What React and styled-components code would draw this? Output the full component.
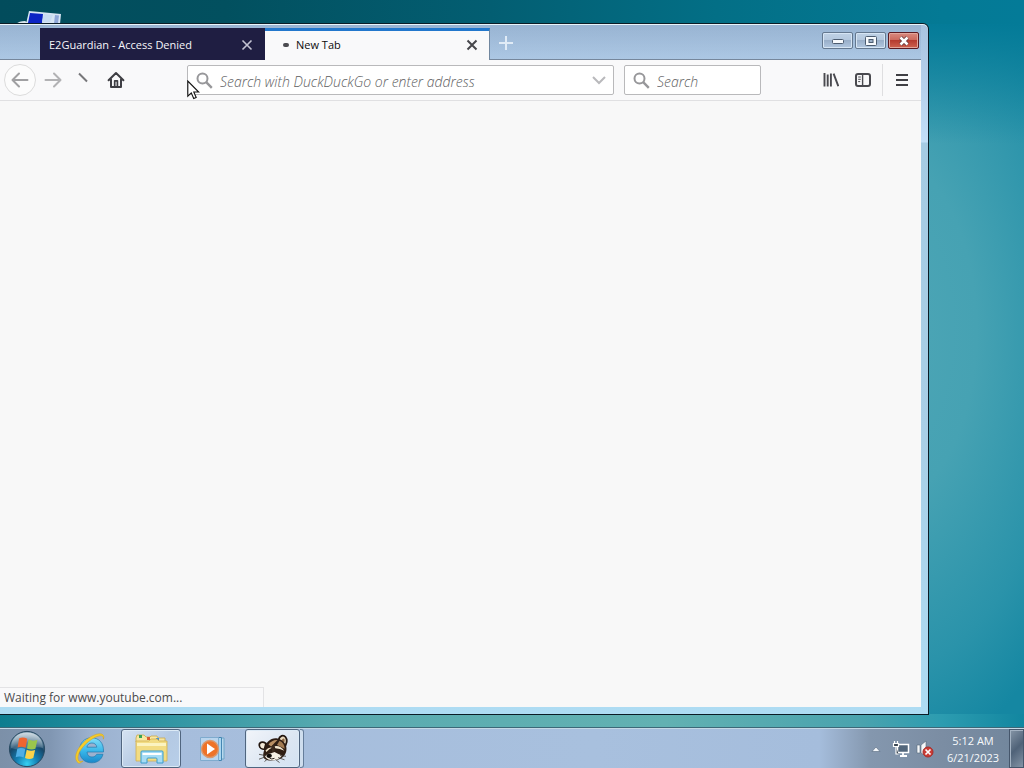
import React from 'react';
import styled, { createGlobalStyle, css } from 'styled-components';

const GlobalStyle = createGlobalStyle`
  *, *::before, *::after { box-sizing: border-box; }
  body {
    margin: 0;
    font-family: "Open Sans", "Noto Sans", sans-serif;
    font-size: 12px;
    line-height: 16px;
    color: #0c0c0d;
  }
  button, input { font: inherit; color: inherit; }
  button { border: 0; padding: 0; background: none; display: flex; align-items: center; justify-content: center; }
  svg { display: block; flex: none; }
`;

const Desktop = styled.div`
  position: relative;
  display: flex;
  flex-direction: column;
  height: 100vh;
  overflow: hidden;
  background:
    linear-gradient(to right, #0d7d8f 0, #2790a0 12%, #5aabb0 33%, #62b1b2 65%, #4aa3ae 84%, #2c9cb0 92%, #1286a0 100%) 0 100% / 100% 54px no-repeat,
    linear-gradient(to right, #024c5c 0, #02505f 22%, #035e72 48%, #036f86 70%, #047a95 92%, #047b98 100%) 0 0 / 100% 24px no-repeat,
    radial-gradient(ellipse 240px 440px at 86% 43%, #4ea6b6 0, #46a2b3 40%, #2a93aa 78%, #1587a2 100%);
`;

const DesktopShade = styled.div`
  position: absolute;
  top: 24px;
  right: 0;
  width: 100%;
  height: 120px;
  background: linear-gradient(to bottom, #047b98, rgba(10, 127, 155, 0));
`;

const DesktopIcon = styled.svg`
  position: absolute;
  left: 16px;
  top: 10px;
`;

const Window = styled.main`
  position: relative;
  flex: 1;
  min-height: 0;
  display: flex;
  flex-direction: column;
  margin: 23px 95px 13px 0;
  padding: 0 7px 7px 0;
  border: 1px solid #0b1c26;
  border-left: 0;
  border-radius: 0 6px 0 0;
  box-shadow: inset 0 1px 0 #e9f4fa;
  background:
    linear-gradient(to bottom, #a9c3df 0, #b7d2ee 70px, #c3dff8 118px, #a5cbe3 119px, #a9cfe6 60%, #aedcf3 100%);
`;

const TitleBar = styled.header`
  display: flex;
  height: 36px;
  padding-left: 40px;
  border-bottom: 1px solid #76879c;
  background: linear-gradient(to bottom, rgba(120, 150, 185, 0.35), rgba(160, 190, 220, 0.25));
  box-shadow: inset 0 1px 0 #e9f4fa;
`;

const Tabs = styled.div`
  display: flex;
  padding-top: 4px;
  font-size: 11px;
`;

const Tab = styled.div`
  display: flex;
  align-items: center;
  width: 225px;
  height: 32px;
  padding: 1px 11px 0 9px;
  color: ${p => (p.$active ? '#0c0c0d' : '#f6f6fa')};
  background: ${p => (p.$active ? '#f9f9fa' : '#1f1e42')};
  ${p => p.$active && css`
    padding: 0 10px 2px 18px;
    border-top: 3px solid #2277cc;
    border-right: 1px solid #71879f;
  `}
`;

const TabTitle = styled.span`
  flex: 1;
  white-space: nowrap;
`;

const LoadingDot = styled.span`
  width: 6px;
  height: 4px;
  margin-right: 7px;
  border-radius: 2px;
  background: #4b4b50;
`;

const IconButton = styled.button`
  width: ${p => p.$w || 32}px;
  height: ${p => p.$h || 32}px;
`;

const WindowControls = styled.div`
  display: flex;
  gap: 2px;
  margin-left: auto;
  padding: 8px 2px 0 0;
`;

const WindowControl = styled.button`
  width: 31px;
  height: 17px;
  border: 1px solid ${p => (p.$close ? '#5b1a22' : '#64788f')};
  border-radius: 2px;
  box-shadow: inset 0 0 0 1px ${p => (p.$close ? '#e2a59b' : '#d6e5f4')};
  background: ${p => (p.$close
    ? 'linear-gradient(#d98a80 0, #cc6a5e 45%, #b53b30 50%, #cf6250 100%)'
    : 'linear-gradient(#bfd1e5 0, #b4c8de 45%, #99afc9 50%, #b1c7e0 100%)')};
`;

const Toolbar = styled.nav`
  display: flex;
  align-items: center;
  height: 41px;
  padding: 0 3px 0 4px;
  color: #4a4a4f;
  background: #f9f9fa;
  border-bottom: 1px solid #e0e0e2;
`;

const BackButton = styled(IconButton)`
  border: 1px solid #dcdcdc;
  border-radius: 50%;
  background: #fcfcfc;
  color: #a0a0a2;
`;

const ForwardButton = styled(IconButton)`
  margin-left: 1px;
  color: #b2b2b4;
`;

const Fields = styled.div`
  display: flex;
  flex: 1;
  gap: 10px;
  margin: 0 54px 0 52px;
`;

const Field = styled.label`
  display: flex;
  align-items: center;
  flex: ${p => (p.$narrow ? '0 0 137px' : '1')};
  min-width: 0;
  height: 30px;
  padding: 0 6px 0 8px;
  border: 1px solid #b9b9bb;
  border-radius: 2px;
  background: #fff;
  color: #97979a;
`;

const FieldInput = styled.input`
  flex: 1;
  min-width: 0;
  height: 28px;
  margin-left: 7px;
  padding: 2px 0 0;
  border: 0;
  outline: 0;
  background: transparent;
  font-size: 14px;
  &::placeholder {
    color: #5e5e61;
    opacity: 1;
    font-style: italic;
    font-weight: 300;
  }
`;

const Divider = styled.span`
  width: 1px;
  height: 32px;
  margin: 0 3px;
  background: #dedee0;
`;

const Page = styled.section`
  flex: 1;
  min-height: 0;
  display: flex;
  align-items: flex-end;
  background: #f8f8f8;
`;

const Status = styled.div`
  width: 264px;
  height: 20px;
  padding: 2px 4px;
  border: 1px solid #e3e3e5;
  border-width: 1px 1px 0 0;
  background: #f9f9fa;
  color: #4a4a4c;
`;

const Taskbar = styled.footer`
  position: relative;
  display: flex;
  align-items: stretch;
  height: 40px;
  border-top: 1px solid #c4d8e6;
  box-shadow: 0 -1px 0 #3c6878;
  background: linear-gradient(to right, #7c90a8 0, #8096b2 50px, #9bb1ce 90px, #a6bddc 160px, #a8c0de 58%, #a5bddc 80%, #8497ae 85%, #7b8da3 92%, #71869c 100%);
`;

const TaskButton = styled.button`
  width: ${p => p.$w}px;
  height: 39px;
  border-radius: 3px;
  ${p => p.$open && css`
    border: 1px solid #50657f;
    box-shadow: inset 0 0 0 1px #dceaf6;
    background: linear-gradient(135deg, #d5e2f1, #b4c9e3 55%, #b8cfe9);
  `}
  ${p => p.$active && css`
    background: linear-gradient(135deg, #f2f5fa, #dce6f2 60%, #d3e2f3);
  `}
`;

const StackedEdge = styled.span`
  width: 4px;
  height: 39px;
  border: 1px solid #667e9b;
  border-left: 0;
  border-radius: 0 3px 3px 0;
  background: #cfdeee;
`;

const TaskGap = styled.span`
  width: ${p => p.$w}px;
`;

const Tray = styled.div`
  display: flex;
  align-items: center;
  margin-left: auto;
`;

const Clock = styled.time`
  width: 72px;
  text-align: center;
  font-size: 11px;
  line-height: 17px;
  padding-top: 1px;
  color: #f7fafc;
`;

const ShowDesktop = styled.button`
  width: 15px;
  height: 39px;
  border: 1px solid #45566b;
  box-shadow: inset 1px 1px 0 #a3b2c2;
  background: linear-gradient(135deg, #8696a7, #4f6278 50%, #8393a5);
`;

const Pointer = styled.svg`
  position: absolute;
  left: 187px;
  top: 80px;
  pointer-events: none;
`;

const Cross = ({ color, w = 2 }) => (
  <svg width="12" height="12" viewBox="0 0 12 12" fill="none" stroke={color} strokeWidth={w}>
    <path d="M1.5 1.5l9 9M10.5 1.5l-9 9" />
  </svg>
);

const Arrow = ({ forward }) => (
  <svg width="18" height="16" viewBox="0 0 18 16" fill="none" stroke="currentColor" strokeWidth="2" strokeLinecap="round" strokeLinejoin="round">
    <path d={forward ? 'M10 1.5L16.500 8L10 14.500M16 8H1.500' : 'M8 1.500L1.500 8L8 14.500M2 8h14.500'} />
  </svg>
);

const Magnifier = () => (
  <svg width="17" height="17" viewBox="0 0 17 17" fill="none" stroke="currentColor" strokeWidth="2">
    <circle cx="6.5" cy="6.5" r="5" />
    <path d="M10.2 10.2l5.6 5.6" strokeWidth="2.4" />
  </svg>
);

const HomeIcon = () => (
  <svg width="18" height="18" viewBox="0 0 18 18" fill="none" stroke="#3f3f44" strokeWidth="2" strokeLinejoin="round" strokeLinecap="round">
    <path d="M1.6 9.3L9 2l7.4 7.3M4 8.5V16h10V8.5" />
    <path d="M7.700 15.500V9.800h2.700v5.700" strokeWidth="1.700" />
  </svg>
);

const LibraryIcon = () => (
  <svg width="16" height="16" viewBox="0 0 16 16" fill="none" stroke="#4a4a4f" strokeWidth="1.9">
    <path d="M1.500 1v13.600M4.700 2.600v12M7.900 1.400v13.200M10.600 1.600l4.700 12.600" />
  </svg>
);

const SidebarIcon = () => (
  <svg width="16" height="16" viewBox="0 0 16 16" fill="none" stroke="#4a4a4f">
    <rect x="1" y="2" width="14" height="12" rx="2" strokeWidth="2" />
    <path d="M7.6 3v10" strokeWidth="1.4" />
    <path d="M3.2 5h2.6M3.2 7.3h2.6M3.2 9.6h2" />
  </svg>
);

const MenuIcon = () => (
  <svg width="14" height="14" viewBox="0 0 14 14" stroke="#3f3f44" strokeWidth="2">
    <path d="M1 2h12M1 7h12M1 12h12" />
  </svg>
);

const StartOrb = () => (
  <svg width="38" height="38" viewBox="0 0 38 38">
    <defs>
      <radialGradient id="orb" cx="50%" cy="92%" r="85%">
        <stop offset="0" stopColor="#35d0f2" />
        <stop offset=".35" stopColor="#1481b5" />
        <stop offset=".7" stopColor="#174769" />
        <stop offset="1" stopColor="#6f91a8" />
      </radialGradient>
      <linearGradient id="gloss" x1="0" y1="0" x2="0" y2="1">
        <stop offset="0" stopColor="#fff" stopOpacity=".65" />
        <stop offset="1" stopColor="#fff" stopOpacity=".12" />
      </linearGradient>
    </defs>
    <circle cx="19" cy="19" r="17.6" fill="url(#orb)" stroke="#294a62" />
    <path d="M3 18C3 8 10 2.5 19 2.5S35 8 35 18c-9-3-22 4-32 0z" fill="url(#gloss)" />
    <path d="M11 8.500q4-2 8.300.3l-1.700 9q-4-2-8-.4z" fill="#ee6530" />
    <path d="M20.600 9.600q4.400 2.200 8.800.2l-2 9q-4 1.500-8.400-.4z" fill="#9ac64c" />
    <path d="M9.300 18.800q4-1.600 8 .3l-1.700 8.400q-4-1.900-7.900-.3z" fill="#4faee5" />
    <path d="M18.700 19.700q4.200 1.900 8.400.2l-1.800 8.200q-4.300 1.800-8.300-.2z" fill="#fbd34a" />
  </svg>
);

const ExplorerE = () => (
  <svg width="32" height="32" viewBox="0 0 32 32" fill="none">
    <defs>
      <linearGradient id="ie" x1="0" y1="0" x2="0" y2="1">
        <stop offset="0" stopColor="#82def8" />
        <stop offset=".55" stopColor="#37b5e8" />
        <stop offset="1" stopColor="#1a87c9" />
      </linearGradient>
    </defs>
    <path d="M29.500 19H13c.2 3.400 2.200 5 5 5 2.200 0 3.800-1 4.700-2.700h6.300c-1.500 5.500-5.500 8.500-11.200 8.500C10.500 29.800 5.500 25 5.500 17.500S10.500 4.800 17.500 4.800c7.500 0 12.500 5.200 12 14.200zM22.800 14.200c-.3-2.600-2.200-4.200-4.900-4.200s-4.600 1.600-5 4.200z" fill="url(#ie)" stroke="#2379ae" strokeWidth=".7" />
    <path d="M4.500 30C-1 26.500 2 17 8.500 10.400 15 3.500 25-1.500 29 1.800c1 1 1 2.600.3 4.400.1-2-.3-3-1.500-3.300C23.500 1.900 15.500 7 10 12.700 4.500 18.700 2.400 25 5 28c1 .8 2.300.6 4 .1-2.200 1.600-3.500 2.500-4.500 1.900z" fill="#f6cc29" stroke="#d3a11c" strokeWidth=".5" />
  </svg>
);

const FolderIcon = () => (
  <svg width="34" height="32" viewBox="0 0 34 32">
    <path d="M2 5l1-3h7l2 2h4l1-1h6l1 2h7v4H2z" fill="#f7e7a0" stroke="#caa84c" strokeWidth=".8" />
    <path d="M5 2h3v3H5z" fill="#34a357" /><path d="M13 4h3v3h-3z" fill="#dc5a2e" /><path d="M22 5h3v3h-3z" fill="#4c94d0" />
    <path d="M2 8h13l2-2h6l2 2h8v20H2z" fill="#f2dc83" stroke="#d0ae52" strokeWidth=".8" />
    <path d="M3 10h29v3H3z" fill="#fbf3c0" />
    <path d="M7 30V19q0-1 1-1h20q1 0 1 1v11h-6v-4q0-1-1-1h-8q-1 0-1 1v4z" fill="#a6dcf5" stroke="#3a9ccc" strokeWidth="1" />
    <path d="M8.500 21h19" stroke="#fff" strokeWidth="2" />
  </svg>
);

const MediaIcon = () => (
  <svg width="28" height="26" viewBox="0 0 28 26">
    <path d="M10 2h15v21H10z" fill="#b9d9ee" stroke="#6ea6c8" />
    <path d="M6 1.500h16.500v23H6z" fill="#a9d6f0" stroke="#4586b2" />
    <path d="M1.500 1.500h18v23h-18z" fill="#b9d5ee" stroke="#7fabce" />
    <circle cx="11" cy="13" r="8.500" fill="#ee7328" stroke="#d89a70" strokeWidth="1.400" />
    <path d="M8 7.500l8 5.500-8 5.500z" fill="#fff" />
  </svg>
);

const RaccoonIcon = () => (
  <svg width="34" height="30" viewBox="0 0 34 30">
    <path d="M22.500 6C23.500 1.500 27.500.5 29.500 3c2.300 3 1.200 8-1.700 10.500z" fill="#ead9bd" stroke="#22150d" strokeWidth="1.800" />
    <path d="M25.500 6.500q1.500-3 3-1.500.8 2-.8 4.500z" fill="#8a6542" />
    <path d="M10 9.500C6 6.800 3 8.600 3.300 11.500c.3 2.500 2.600 4 5.200 3.700z" fill="#f4ead8" stroke="#22150d" strokeWidth="1.700" />
    <path d="M8.500 15C9.500 8 15.500 3.200 21.500 4.500 28 6 31.500 11.500 30.300 17c-1 4.500-4.300 7.800-8.800 8.800-5 1-11.500 1.200-13.500-1.600-1.500-2.200-.5-6 .5-9.200z" fill="#2f1e14" />
    <path d="M12.500 10.500Q16 5.500 21.500 6l-6.300 6.500z" fill="#b98f63" />
    <path d="M23.500 6.700q5 2.300 5.200 8L21 11z" fill="#a37b52" />
    <path d="M9.500 16.500q3-3.600 6.500-2.800-2.600 1-5.600 4.300z" fill="#f0e2c8" />
    <path d="M18.500 12.200q6-1 9.800 4.600-4.500-2.600-9-2.600z" fill="#f3e7d0" />
    <path d="M15.800 12l2.500-1 .5 6-2.800 2.200z" fill="#3c2a1e" />
    <path d="M9 22.500q2-3 5.500-3l4-1.500q4 2 7.500 3.500-2.500 4.200-8 4.800-6 .5-9-3.800z" fill="#f6efe4" />
    <ellipse cx="13.200" cy="21.800" rx="2.700" ry="2.100" fill="#0f0b09" />
    <path d="M13.500 24q2 1.800 5 .3" fill="none" stroke="#2b211b" />
    <path d="M9 21.500l-6-1.200M9 23l-6 2.200M11 25.500l-2.500 2M22 23.500l6.500 2.300M19.500 25.500l4 3M24 21.500l6 .8" stroke="#3d3835" strokeWidth=".8" />
  </svg>
);

const NetworkIcon = () => (
  <svg width="18" height="18" viewBox="0 0 18 18" fill="none">
    <path d="M5.500 4.500h11v8h-11z" fill="#52667b" stroke="#fff" strokeWidth="1.500" />
    <path d="M8 16h7M11 13v3" stroke="#fff" strokeWidth="1.800" />
    <path d="M1.500 3.500h5v3h-5zM2.500 1v2.500M5.500 1v2.500M4 6.500V14h2.500" stroke="#fff" strokeWidth="1.200" fill="#3a4653" />
  </svg>
);

const MutedIcon = () => (
  <svg width="18" height="18" viewBox="0 0 18 18">
    <path d="M1 5h3v8H1zM5 5l5-4v15l-5-3z" fill="#f5f7f9" stroke="#56687b" strokeWidth=".6" />
    <circle cx="12" cy="12" r="5" fill="#cb3c35" stroke="#a92d2a" />
    <path d="M9.500 9.500l5 5M14.500 9.500l-5 5" stroke="#fff" strokeWidth="1.700" />
  </svg>
);

export default function App() {
  return (
    <Desktop>
      <GlobalStyle />
      <DesktopShade />
      <DesktopIcon width="46" height="14" viewBox="0 0 46 14">
        <path d="M0 14q3-3 9-3l5 3z" fill="#dbe7ef" />
        <path d="M13 1l32 3-1 10H10z" fill="#d7e5f4" />
        <path d="M14 3l13 1-1 9H12z" fill="#0b24c4" />
        <path d="M28 4l9 1-3 7h-8z" fill="#c8dcf2" />
        <path d="M39 5l4 .5-1 8h-4z" fill="#8fa7d8" />
      </DesktopIcon>

      <Window>
        <TitleBar>
          <Tabs>
            <Tab>
              <TabTitle>E2Guardian - Access Denied</TabTitle>
              <IconButton $w={14} $h={20} aria-label="Close tab"><Cross color="#c3c3d3" w={1.6} /></IconButton>
            </Tab>
            <Tab $active>
              <LoadingDot />
              <TabTitle>New Tab</TabTitle>
              <IconButton $w={14} $h={20} aria-label="Close tab"><Cross color="#47474b" /></IconButton>
            </Tab>
            <IconButton $w={32} $h={30} aria-label="Open a new tab">
              <svg width="14" height="14" viewBox="0 0 14 14" stroke="#e0ebf6" strokeWidth="2"><path d="M7 0v14M0 7h14" /></svg>
            </IconButton>
          </Tabs>
          <WindowControls>
            <WindowControl aria-label="Minimize">
              <svg width="12" height="6" viewBox="0 0 12 6"><rect x=".5" y="1.500" width="11" height="4" rx="1" fill="#f7fafd" stroke="#4c5c70" /></svg>
            </WindowControl>
            <WindowControl aria-label="Maximize">
              <svg width="12" height="10" viewBox="0 0 12 10"><rect x=".5" y=".5" width="11" height="9" rx="1" fill="#f7fafd" stroke="#4c5c70" /><rect x="4" y="3.500" width="4" height="3" fill="#9db2ca" stroke="#4c5c70" /></svg>
            </WindowControl>
            <WindowControl $close aria-label="Close">
              <svg width="12" height="10" viewBox="0 0 12 10" fill="none"><path d="M2.500 1.500l7 7M9.500 1.500l-7 7" stroke="#5d3338" strokeWidth="4" /><path d="M2.500 1.500l7 7M9.500 1.500l-7 7" stroke="#fff" strokeWidth="2.600" /></svg>
            </WindowControl>
          </WindowControls>
        </TitleBar>

        <Toolbar>
          <BackButton aria-label="Back"><Arrow /></BackButton>
          <ForwardButton aria-label="Forward"><Arrow forward /></ForwardButton>
          <IconButton $w={28} aria-label="Stop loading">
            <svg width="12" height="16" viewBox="0 0 12 16" stroke="#77777a" strokeWidth="1.900"><path d="M2 1.500l8 8" /></svg>
          </IconButton>
          <IconButton $w={38} aria-label="Home"><HomeIcon /></IconButton>
          <Fields>
            <Field>
              <Magnifier />
              <FieldInput aria-label="Address" placeholder="Search with DuckDuckGo or enter address" />
              <svg width="16" height="10" viewBox="0 0 16 10" fill="none" stroke="#b9b9bc" strokeWidth="2"><path d="M2 2l6 6 6-6" /></svg>
            </Field>
            <Field $narrow>
              <Magnifier />
              <FieldInput aria-label="Search" placeholder="Search" />
            </Field>
          </Fields>
          <IconButton aria-label="Library"><LibraryIcon /></IconButton>
          <IconButton aria-label="Sidebars"><SidebarIcon /></IconButton>
          <Divider />
          <IconButton aria-label="Menu"><MenuIcon /></IconButton>
        </Toolbar>

        <Page>
          <Status role="status">Waiting for www.youtube.com...</Status>
        </Page>
      </Window>

      <Taskbar>
        <TaskGap $w={8} />
        <TaskButton $w={38} aria-label="Start"><StartOrb /></TaskButton>
        <TaskGap $w={14} />
        <TaskButton $w={60} aria-label="Internet Explorer"><ExplorerE /></TaskButton>
        <TaskGap $w={1} />
        <TaskButton $w={60} $open aria-label="File Explorer"><FolderIcon /></TaskButton>
        <TaskGap $w={2} />
        <TaskButton $w={60} aria-label="Media Player"><MediaIcon /></TaskButton>
        <TaskGap $w={2} />
        <TaskButton $w={55} $open $active aria-label="Browser"><RaccoonIcon /></TaskButton>
        <StackedEdge />
        <Tray>
          <IconButton $w={24} aria-label="Show hidden icons">
            <svg width="10" height="6" viewBox="0 0 10 6"><path d="M1 5.500L5 1l4 4.500z" fill="#f4f7fa" stroke="#55687d" strokeWidth=".6" /></svg>
          </IconButton>
          <IconButton $w={25} aria-label="Network"><NetworkIcon /></IconButton>
          <IconButton $w={24} aria-label="Volume muted"><MutedIcon /></IconButton>
          <Clock>5:12 AM<br />6/21/2023</Clock>
          <ShowDesktop aria-label="Show desktop" />
        </Tray>
      </Taskbar>

      <Pointer width="13" height="20" viewBox="0 0 13 20">
        <path d="M.8 1v15.200l3.500-3.300 2.400 5.600 2.500-1-2.400-5.500h4.900z" fill="#fff" stroke="#111" strokeWidth="1.100" />
      </Pointer>
    </Desktop>
  );
}
